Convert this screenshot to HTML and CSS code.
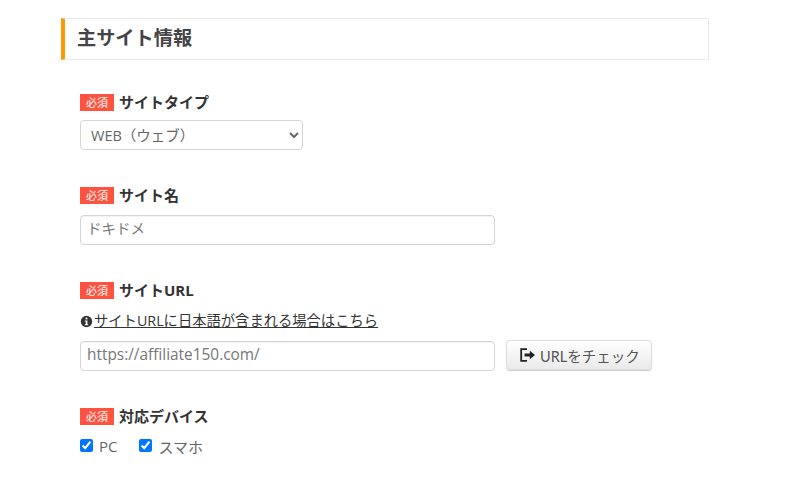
FILE: index.html
```html
<!DOCTYPE html>
<html lang="ja">
<head>
    <meta charset="UTF-8">
    <meta name="viewport" content="width=device-width, initial-scale=1.0">
    <title>主サイト情報</title>
    <link rel="stylesheet" href="styles.css">
</head>
<body>
    <main class="content">
        <h2 class="section-title">主サイト情報</h2>

        <form class="site-form">
            <div class="field field-type">
                <div class="field-label"><span class="required">必須</span><span>サイトタイプ</span></div>
                <select class="control select">
                    <option>WEB（ウェブ）</option>
                </select>
            </div>

            <div class="field field-name">
                <div class="field-label"><span class="required">必須</span><span>サイト名</span></div>
                <input class="control input" type="text" value="ドキドメ">
            </div>

            <div class="field field-url">
                <div class="field-label"><span class="required">必須</span><span>サイトURL</span></div>
                <p class="help">
                    <svg class="info-icon" viewBox="0 0 16 16" aria-hidden="true">
                        <circle cx="8" cy="8" r="7" fill="#333"/>
                        <rect x="6.9" y="3.2" width="2.2" height="2.2" fill="#fff"/>
                        <path d="M6 6.7h3.1v4.7h1v1.3H6v-1.3h1V8H6z" fill="#fff"/>
                    </svg><a href="#">サイトURLに日本語が含まれる場合はこちら</a>
                </p>
                <div class="url-row">
                    <input class="control input" type="text" value="https://affiliate150.com/">
                    <button class="check-button" type="button">
                        <svg class="check-icon" viewBox="0 0 16 14" aria-hidden="true">
                            <path d="M7 1.2H1.2v11.6H7" fill="none" stroke="#222" stroke-width="1.8"/>
                            <path d="M4.5 5.6h5.3V2.8L15 7l-5.2 4.2V8.4H4.5z" fill="#222"/>
                        </svg>
                        URLをチェック
                    </button>
                </div>
            </div>

            <div class="field field-device">
                <div class="field-label"><span class="required">必須</span><span>対応デバイス</span></div>
                <div class="checks">
                    <label class="check"><input type="checkbox" checked>PC</label>
                    <label class="check"><input type="checkbox" checked>スマホ</label>
                </div>
            </div>
        </form>
    </main>
</body>
</html>
```

FILE: styles.css
```css
* {
    box-sizing: border-box;
}

body {
    margin: 0;
    background-color: #fff;
    color: #333;
    font-family: "Open Sans", "Noto Sans CJK JP", sans-serif;
    font-size: 15px;
    overflow: hidden;
}

.content {
    width: 648px;
    margin: 18px 0 0 61px;
}

.section-title {
    height: 42px;
    margin: 0;
    padding-left: 12px;
    border: 1px solid #e8e8e8;
    border-left: 4px solid #f90;
    font-size: 19.2px;
    font-weight: 700;
    line-height: 37px;
    color: #444;
}

.site-form {
    padding-left: 19px;
}

.field-type {
    margin-top: 32px;
}

.field-name {
    margin-top: 35px;
}

.field-url {
    margin-top: 35px;
}

.field-device {
    margin-top: 35px;
}

.field-label {
    display: flex;
    align-items: center;
    gap: 5px;
    height: 20px;
    font-size: 15px;
    font-weight: 700;
    line-height: 20px;
    color: #333;
}

.required {
    width: 34px;
    height: 17px;
    background-color: #ff5340;
    color: #fff;
    font-size: 11px;
    font-weight: 400;
    line-height: 17px;
    text-align: center;
}

.control {
    height: 30px;
    border: 1px solid #d5d5d5;
    border-radius: 4px;
    background-color: #fff;
    color: #666;
    font-family: inherit;
    font-size: 14.5px;
}

.select {
    display: block;
    width: 223px;
    margin-top: 8px;
    padding: 0 6px;
}

.input {
    display: block;
    width: 415px;
    padding: 0 6px 4px;
    box-shadow: inset 0 1px 1px rgba(0, 0, 0, 0.05);
}

.field-name .input {
    margin-top: 10px;
    padding-bottom: 6px;
    color: #777;
}

.url-row .input {
    color: #777;
    font-size: 15.4px;
}

.help {
    display: flex;
    align-items: center;
    height: 20px;
    margin: 11px 0 0;
    font-size: 14.3px;
    line-height: 20px;
}

.help a {
    color: #333;
}

.info-icon {
    width: 13px;
    height: 13px;
    margin-right: 1px;
}

.url-row {
    display: flex;
    align-items: flex-start;
    gap: 11px;
    margin-top: 10px;
}

.check-button {
    display: flex;
    align-items: center;
    gap: 4px;
    width: 146px;
    height: 30px;
    margin-top: -1px;
    padding: 0 0 0 13px;
    border: 1px solid #ddd;
    border-radius: 4px;
    background: linear-gradient(#fff, #eaeaea);
    box-shadow: 0 1px 1px rgba(0, 0, 0, 0.2);
    color: #555;
    font-family: Lato, "Noto Sans CJK JP", sans-serif;
    font-size: 14.5px;
}

.check-icon {
    width: 16px;
    height: 14px;
}

.checks {
    display: flex;
    gap: 22px;
    margin-top: 10px;
}

.check {
    display: flex;
    align-items: center;
    height: 20px;
    color: #666;
    font-size: 15px;
}

.check input {
    width: 13px;
    height: 13px;
    margin: 0 6px 2px 0;
}
```
